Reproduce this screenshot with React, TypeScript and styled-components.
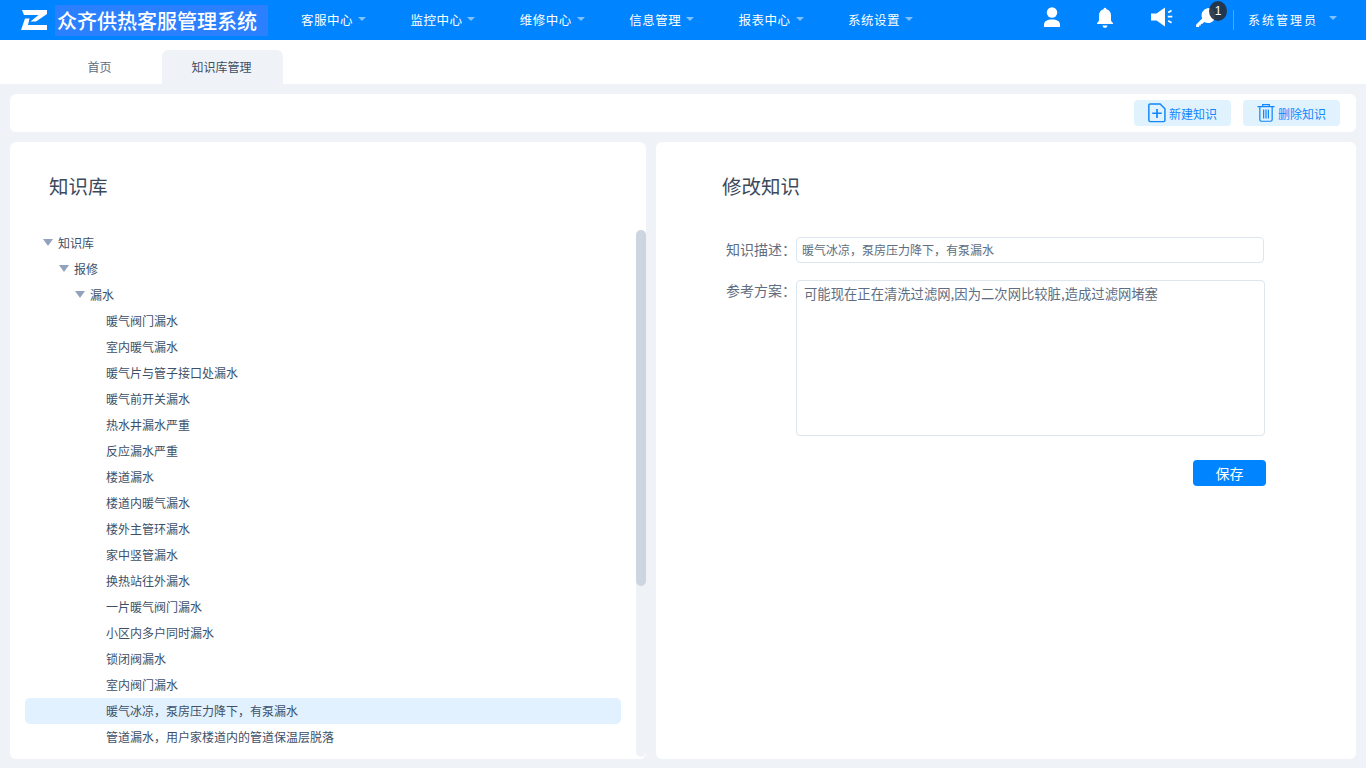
import React from "react";
import styled, { createGlobalStyle } from "styled-components";

const Global = createGlobalStyle`
  html, body { margin: 0; padding: 0; height: 100%; overflow: hidden; }
  body { font-family: "Noto Sans CJK SC", "Liberation Sans", sans-serif; background: #eff3f8; }
  #root { height: 100%; }
  * { box-sizing: border-box; }
`;

const Page = styled.div`
  height: 768px;
  display: flex;
  flex-direction: column;
  background: #eff3f8;
`;

const Header = styled.header`
  height: 40px;
  flex: none;
  display: flex;
  align-items: center;
  background: #0084ff;
  color: #fff;
  padding-left: 21px;
`;

const Logo = styled.svg`
  width: 26px;
  height: 20px;
  flex: none;
  margin-right: 8px;
`;

const Brand = styled.div`
  width: 213px;
  height: 31px;
  flex: none;
  background: #2b80ff;
  font-size: 20px;
  font-weight: 500;
  line-height: 31px;
  padding-left: 2px;
  white-space: nowrap;
`;

const Nav = styled.nav`
  display: flex;
  margin-left: 33px;
`;

const NavItem = styled.div`
  width: 109.4px;
  display: flex;
  align-items: center;
  font-size: 12.5px;
  letter-spacing: 0.5px;
  line-height: 40px;
  white-space: nowrap;
`;

const Caret = styled.i`
  display: block;
  width: 0;
  height: 0;
  margin-left: 5px;
  margin-top: -3px;
  border-left: 4px solid transparent;
  border-right: 4px solid transparent;
  border-top: 4px solid rgba(255, 255, 255, 0.5);
`;

const HeaderRight = styled.div`
  margin-left: auto;
  display: flex;
  align-items: center;
  height: 40px;
`;

const IconSlot = styled.div<{ $w: number }>`
  position: relative;
  width: ${(p) => p.$w}px;
  height: 40px;
  display: flex;
  align-items: flex-start;
  padding-top: 6px;
  justify-content: center;
`;

const Badge = styled.span`
  position: absolute;
  left: 32px;
  top: 1px;
  width: 18px;
  height: 20px;
  border-radius: 50%;
  background: rgba(38, 50, 64, 0.92);
  color: #fff;
  font-size: 12px;
  line-height: 20px;
  text-align: center;
  font-family: "Liberation Sans", sans-serif;
`;

const Divider = styled.div`
  width: 1px;
  height: 20px;
  background: rgba(255, 255, 255, 0.3);
  margin: 0 14px 0 0;
`;

const UserName = styled.div`
  display: flex;
  align-items: center;
  font-size: 12px;
  letter-spacing: 2px;
  width: 118px;
  white-space: nowrap;
  padding-bottom: 1px;
  & > i {
    margin-left: 11px;
  }
`;

const Tabs = styled.div`
  height: 44px;
  flex: none;
  background: #fff;
  display: flex;
  align-items: flex-end;
  padding-left: 40px;
`;

const Tab = styled.div<{ $active?: boolean }>`
  width: 121px;
  height: 34px;
  margin-right: 1px;
  padding-right: 2px;
  border-radius: 6px 6px 0 0;
  background: ${(p) => (p.$active ? "#eff3f8" : "transparent")};
  color: ${(p) => (p.$active ? "#3c4d66" : "#5e6d82")};
  font-size: 12px;
  line-height: 34px;
  text-align: center;
`;

const Main = styled.main`
  flex: 1;
  min-height: 0;
  display: flex;
  flex-direction: column;
  gap: 10px;
  padding: 10px 10px 9px;
`;

const Toolbar = styled.div`
  height: 38px;
  flex: none;
  background: #fff;
  border-radius: 6px;
  display: flex;
  align-items: center;
  justify-content: flex-end;
  gap: 12px;
  padding-right: 16px;
`;

const ToolButton = styled.button`
  width: 97px;
  height: 26px;
  border: 0;
  border-radius: 4px;
  background: #e1f2ff;
  color: #1187fb;
  font-family: inherit;
  font-size: 12px;
  display: flex;
  align-items: center;
  justify-content: center;
  gap: 3px;
  padding: 0;
`;

const Panels = styled.div`
  flex: 1;
  min-height: 0;
  display: flex;
  gap: 10px;
`;

const Panel = styled.section<{ $w: number }>`
  width: ${(p) => p.$w}px;
  flex: none;
  background: #fff;
  border-radius: 6px;
  overflow: hidden;
  display: flex;
  flex-direction: column;
`;

const Title = styled.h2<{ $left: number }>`
  margin: 0;
  height: 88px;
  flex: none;
  padding: 29px 0 0 ${(p) => p.$left}px;
  font-size: 19.5px;
  font-weight: 400;
  line-height: 30px;
  color: #3c4a5c;
`;

const TreeArea = styled.div`
  flex: 1;
  min-height: 0;
  margin-bottom: 2px;
  display: flex;
  padding-left: 15px;
`;

const TreeList = styled.div`
  flex: 1;
  min-width: 0;
  padding-right: 15px;
  overflow: hidden;
`;

const ScrollTrack = styled.div`
  width: 10px;
  flex: none;
  background: #eff3f8;
  border-radius: 5px;
`;

const ScrollThumb = styled.div`
  height: 356px;
  background: #cdd5e1;
  border-radius: 5px;
`;

const TreeRow = styled.div<{ $level: number; $selected?: boolean }>`
  height: 26px;
  display: flex;
  align-items: center;
  padding: 0 0 2px ${(p) => p.$level * 16 + 18}px;
  border-radius: 5px;
  background: ${(p) => (p.$selected ? "#e1f1ff" : "transparent")};
  color: #3e5068;
  font-size: 12px;
  white-space: nowrap;
`;

const TreeCaret = styled.i<{ $hidden?: boolean }>`
  display: block;
  flex: none;
  width: 0;
  height: 0;
  margin: 1px 5px 0 0;
  border-left: 5px solid transparent;
  border-right: 5px solid transparent;
  border-top: 7px solid ${(p) => (p.$hidden ? "transparent" : "#94a3bd")};
`;

const Form = styled.div`
  display: grid;
  grid-template-columns: 140px 470px;
  row-gap: 17px;
  align-items: start;
`;

const Label = styled.label<{ $lh: number }>`
  font-size: 14px;
  color: #5e6d82;
  text-align: right;
  line-height: ${(p) => p.$lh}px;
  white-space: nowrap;
`;

const TextInput = styled.input`
  width: 468px;
  height: 26px;
  border: 1px solid #dde5ef;
  border-radius: 4px;
  padding: 0 5px 1px;
  font-family: inherit;
  font-size: 12px;
  color: #5e6d82;
  outline: none;
`;

const TextArea = styled.textarea`
  width: 469px;
  height: 156px;
  border: 1px solid #dde5ef;
  border-radius: 4px;
  padding: 3px 7px;
  font-family: inherit;
  font-size: 13.33px;
  line-height: 20px;
  color: #5e6d82;
  outline: none;
  resize: none;
  display: block;
`;

const FormFooter = styled.div`
  width: 610px;
  margin-top: 24px;
  display: flex;
  justify-content: flex-end;
`;

const SaveButton = styled.button`
  width: 73px;
  height: 26px;
  border: 0;
  border-radius: 4px;
  background: #0084ff;
  color: #fff;
  font-family: inherit;
  font-size: 14px;
  padding: 0;
`;

const FormWrap = styled.div`
  margin-top: 7px;
`;

const navItems = ["客服中心", "监控中心", "维修中心", "信息管理", "报表中心", "系统设置"];
const leaves = [
  "暖气阀门漏水", "室内暖气漏水", "暖气片与管子接口处漏水", "暖气前开关漏水", "热水井漏水严重", "反应漏水严重",
  "楼道漏水", "楼道内暖气漏水", "楼外主管环漏水", "家中竖管漏水", "换热站往外漏水", "一片暖气阀门漏水",
  "小区内多户同时漏水", "锁闭阀漏水", "室内阀门漏水", "暖气冰凉，泵房压力降下，有泵漏水", "管道漏水，用户家楼道内的管道保温层脱落",
];

export default function App() {
  return (
    <Page>
      <Global />
      <Header>
        <Logo viewBox="0 0 26 20">
          <path fill="#fff" d="M1 0H26V4L15 11.600H9.500L17.500 5H3Z" />
          <path fill="#fff" d="M4 8.500H8.500L7 15H26V20H0Z" />
        </Logo>
        <Brand>众齐供热客服管理系统</Brand>
        <Nav>
          {navItems.map((n) => (
            <NavItem key={n}>
              {n}
              <Caret />
            </NavItem>
          ))}
        </Nav>
        <HeaderRight>
          <IconSlot $w={22}>
            <svg width="18" height="22" viewBox="0 0 18 22" fill="#fff">
              <circle cx="9" cy="6.500" r="5.200" />
              <path d="M1 21v-2.500C1 15.500 4 13.500 9 13.500s8 2 8 5V21Z" />
            </svg>
          </IconSlot>
          <IconSlot $w={84}>
            <svg width="18" height="24" viewBox="0 0 18 24" fill="#fff">
              <path d="M7.600 3.200a1.400 1.400 0 0 1 2.800 0c3 .7 4.600 3 4.600 6v4.500c0 1.400.7 2.300 2 3.200v1.100H1v-1.100c1.300-.9 2-1.800 2-3.200V9.200c0-3 1.600-5.300 4.600-6Z" />
              <path d="M6.500 19.400h5c-.2 1.500-1.200 2.400-2.500 2.400s-2.300-.9-2.500-2.400Z" />
            </svg>
          </IconSlot>
          <IconSlot $w={30}>
            <svg width="22" height="24" viewBox="0 0 22 24" fill="#fff">
              <path d="M0 7.500h5.500L14 1.500v19l-8.500-6H0Z" />
              <path d="M16.800 9.800h4.500v1.800h-4.500ZM16.800 5.800l3.300-2 .9 1.500-3.300 2ZM16.800 15.400l.9-1.500 3.300 2-.9 1.500Z" />
            </svg>
          </IconSlot>
          <IconSlot $w={56}>
            <svg width="20" height="24" viewBox="0 0 20 24" fill="#fff">
              <path d="M13 2a7.500 7.500 0 1 1-3.700 14l-1.800 1.800-1.600.1-.1 1.500-1.500.2-.2 1.400H1.500L1 21l.2-2.600 6-6A7.500 7.500 0 0 1 13 2Z" />
            </svg>
            <Badge>1</Badge>
          </IconSlot>
          <Divider />
          <UserName>
            系统管理员
            <Caret />
          </UserName>
        </HeaderRight>
      </Header>
      <Tabs>
        <Tab>首页</Tab>
        <Tab $active>知识库管理</Tab>
      </Tabs>
      <Main>
        <Toolbar>
          <ToolButton>
            <svg width="18" height="20" viewBox="1.500 1 17 18.500" fill="none" stroke="#1187fb" strokeWidth="1.400">
              <path d="M3.500 1.700H13l4.500 4.500v11a1.200 1.200 0 0 1-1.200 1.200H3.500a1.200 1.200 0 0 1-1.200-1.200V2.900a1.200 1.200 0 0 1 1.200-1.200Z" />
              <path d="M10 6.500v8.500M5.500 10.500h9" strokeWidth="1.600" />
            </svg>
            新建知识
          </ToolButton>
          <ToolButton>
            <svg width="18" height="20" viewBox="0.500 0.800 19 19" fill="none" stroke="#1187fb" strokeWidth="1.300">
              <path d="M1 3.500h18M6.500 3.500V1.500h7v2M3.500 3.500v14a1.500 1.500 0 0 0 1.500 1.500h10a1.500 1.500 0 0 0 1.500-1.500v-14" />
              <path d="M7.500 6.500v9.500M10 6.500v9.500M12.500 6.500v9.500" />
            </svg>
            删除知识
          </ToolButton>
        </Toolbar>
        <Panels>
          <Panel $w={636}>
            <Title $left={39}>知识库</Title>
            <TreeArea>
              <TreeList>
                <TreeRow $level={0}><TreeCaret />知识库</TreeRow>
                <TreeRow $level={1}><TreeCaret />报修</TreeRow>
                <TreeRow $level={2}><TreeCaret />漏水</TreeRow>
                {leaves.map((l) => (
                  <TreeRow key={l} $level={3} $selected={l.startsWith("暖气冰凉")}>
                    <TreeCaret $hidden />
                    {l}
                  </TreeRow>
                ))}
              </TreeList>
              <ScrollTrack>
                <ScrollThumb />
              </ScrollTrack>
            </TreeArea>
          </Panel>
          <Panel $w={700}>
            <Title $left={66}>修改知识</Title>
            <FormWrap>
              <Form>
                <Label $lh={24}>知识描述：</Label>
                <TextInput readOnly value="暖气冰凉，泵房压力降下，有泵漏水" />
                <Label $lh={20}>参考方案：</Label>
                <TextArea readOnly value="可能现在正在清洗过滤网,因为二次网比较脏,造成过滤网堵塞" />
              </Form>
              <FormFooter>
                <SaveButton>保存</SaveButton>
              </FormFooter>
            </FormWrap>
          </Panel>
        </Panels>
      </Main>
    </Page>
  );
}
